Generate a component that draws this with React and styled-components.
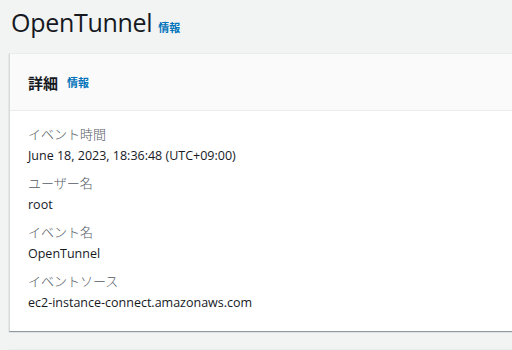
import React from "react";
import styled, { createGlobalStyle } from "styled-components";

const Global = createGlobalStyle`
  html, body { margin: 0; padding: 0; background: #f2f3f3; }
  body { font-family: "Open Sans", "Noto Sans CJK JP", sans-serif; color: #16191f; }
`;

const Page = styled.div`
  width: 512px;
  height: 350px;
  overflow: hidden;
  background: #f2f3f3;
  padding: 0 0 0 9px;
  box-sizing: border-box;
`;

const TitleRow = styled.div`
  display: flex;
  align-items: baseline;
  gap: 6px;
  height: 53px;
  padding: 4px 0 0 2px;
  box-sizing: border-box;
`;

const Title = styled.h1`
  margin: 0;
  font-family: "Open Sans", "Noto Sans CJK JP", sans-serif;
  font-weight: 400;
  font-size: 25px;
  line-height: 36px;
  color: #16191f;
  letter-spacing: -0.3px;
`;

const InfoLink = styled.a`
  font-family: "Noto Sans CJK JP", sans-serif;
  font-weight: 700;
  font-size: 11px;
  color: #0073bb;
  text-decoration: none;
`;

const Card = styled.section`
  width: 540px;
  background: #fff;
  border-top: 1px solid #eaeded;
  border-left: 1px solid #d5dbdb;
  box-shadow: 0 1px 1px 0 rgba(0, 28, 36, 0.3), 1px 1px 1px 0 rgba(0, 28, 36, 0.15);
`;

const CardHeader = styled.div`
  display: flex;
  align-items: center;
  gap: 9px;
  height: 57px;
  padding: 0 0 0 18px;
  background: #fafafa;
  border-bottom: 1px solid #eaeded;
  box-sizing: border-box;
`;

const HeaderTitle = styled.h2`
  margin: 0;
  font-family: "Noto Sans CJK JP", sans-serif;
  font-weight: 700;
  font-size: 15px;
  color: #16191f;
`;

const CardBody = styled.dl`
  margin: 0;
  padding: 13px 0 19px 18px;
  display: flex;
  flex-direction: column;
`;

const Field = styled.div`
  display: flex;
  flex-direction: column;
  gap: 3px;
  margin-bottom: 8px;
  &:last-child { margin-bottom: 0; }
`;

const Label = styled.dt`
  font-family: "Noto Sans CJK JP", sans-serif;
  font-size: 13px;
  line-height: 19px;
  color: #545b64;
  font-weight: 300;
`;

const Value = styled.dd`
  margin: 0;
  font-family: "Open Sans", "Noto Sans CJK JP", sans-serif;
  font-size: 12.5px;
  line-height: 19px;
  color: #16191f;
`;

const NextCard = styled.div`
  margin-top: 18px;
  height: 10px;
  border-top: 1px solid #eaeded;
  background: #f2f3f3;
`;

const fields = [
  ["イベント時間", "June 18, 2023, 18:36:48 (UTC+09:00)"],
  ["ユーザー名", "root"],
  ["イベント名", "OpenTunnel"],
  ["イベントソース", "ec2-instance-connect.amazonaws.com"],
];

export default function App() {
  return (
    <>
      <Global />
      <Page>
        <TitleRow>
          <Title>OpenTunnel</Title>
          <InfoLink href="#">情報</InfoLink>
        </TitleRow>
        <Card>
          <CardHeader>
            <HeaderTitle>詳細</HeaderTitle>
            <InfoLink href="#">情報</InfoLink>
          </CardHeader>
          <CardBody>
            {fields.map(([l, v]) => (
              <Field key={l}>
                <Label>{l}</Label>
                <Value>{v}</Value>
              </Field>
            ))}
          </CardBody>
        </Card>
        <NextCard />
      </Page>
    </>
  );
}
